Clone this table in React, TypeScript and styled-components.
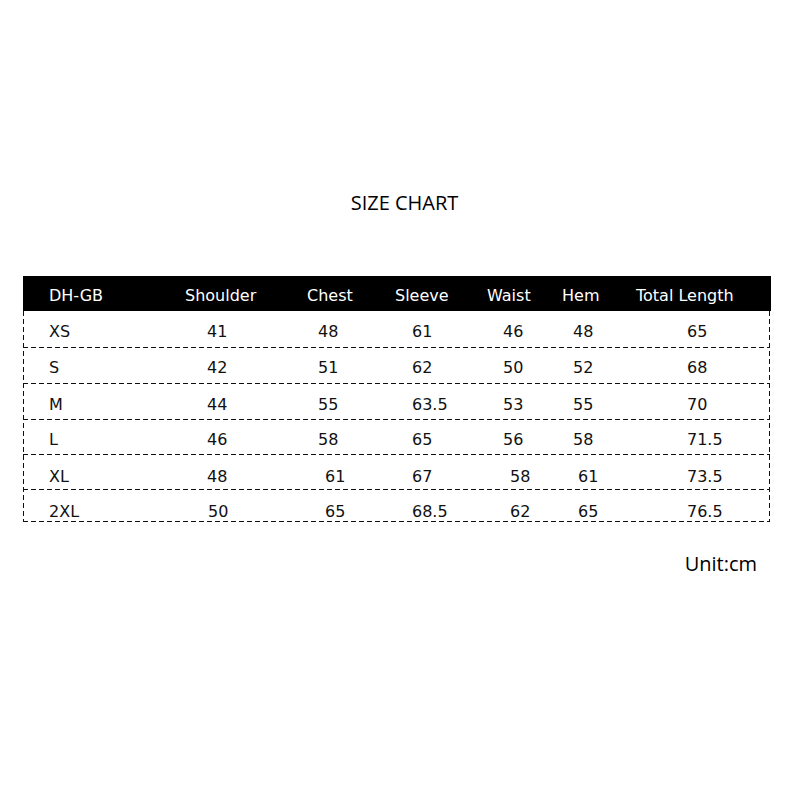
import * as React from "react";
import styled, { createGlobalStyle } from "styled-components";

const GlobalStyle = createGlobalStyle`
    html, body {
        margin: 0;
        padding: 0;
        background: #ffffff;
    }
`;

// grid columns start at the header labels; data sits a little further in
const COLUMNS = "162px 122px 88px 92px 75px 74px 1fr";
const DATA_INDENT = [26, 22, 11, 17, 16, 11, 51];
const HEAD_INDENT = [26, 0, 0, 0, 0, 0, 0];

const HEADINGS = ["DH-GB", "Shoulder", "Chest", "Sleeve", "Waist", "Hem", "Total Length"];

type SizeRow = {
    values: string[];
    height: number;
    pad: number;
    nudge?: number[];
};

const ROWS: SizeRow[] = [
    { values: ["XS", "41", "48", "61", "46", "48", "65"], height: 37, pad: 4 },
    { values: ["S", "42", "51", "62", "50", "52", "68"], height: 36, pad: 3 },
    { values: ["M", "44", "55", "63.5", "53", "55", "70"], height: 36, pad: 4 },
    { values: ["L", "46", "58", "65", "56", "58", "71.5"], height: 35, pad: 4 },
    { values: ["XL", "48", "61", "67", "58", "61", "73.5"], height: 35, pad: 8, nudge: [0, 0, 7, 0, 7, 5, 0] },
    { values: ["2XL", "50", "65", "68.5", "62", "65", "76.5"], height: 32, pad: 10, nudge: [0, 1, 7, 0, 7, 5, 0] },
];

const dashH = `repeating-linear-gradient(to right, #111 0 5px, transparent 5px 8px)`;
const dashV = `repeating-linear-gradient(to bottom, #111 0 5px, transparent 5px 8px)`;

const Page = styled.div`
    width: 800px;
    height: 800px;
    padding-top: 190px;
    box-sizing: border-box;
    display: flex;
    flex-direction: column;
    align-items: center;
`;

const Title = styled.h1`
    margin: 0 0 60px 9px;
    font-family: "Open Sans", "Liberation Sans", sans-serif;
    font-weight: 400;
    font-size: 20px;
    line-height: 26px;
    color: #000;
`;

const Table = styled.div`
    width: 748px;
    margin-right: 6px;
    display: flex;
    flex-direction: column;
    font-family: "DejaVu Sans", Verdana, sans-serif;
    font-size: 16px;
`;

const HeaderRow = styled.div`
    display: grid;
    grid-template-columns: ${COLUMNS};
    align-items: center;
    height: 35px;
    padding-top: 4px;
    box-sizing: border-box;
    background: #000;
    color: #fff;
`;

const Body = styled.div`
    width: 747px;
    background:
        ${dashV} left top / 1px 100% no-repeat,
        ${dashV} right top / 1px 100% no-repeat;
`;

const Row = styled.div<{ $height: number; $pad: number }>`
    display: grid;
    grid-template-columns: ${COLUMNS};
    align-items: center;
    height: ${p => p.$height}px;
    padding-top: ${p => p.$pad}px;
    box-sizing: border-box;
    background: ${dashH} left bottom / 100% 1px no-repeat;
    color: #111;
`;

const Cell = styled.span<{ $indent: number }>`
    padding-left: ${p => p.$indent}px;
    white-space: nowrap;
`;

const Unit = styled.div`
    align-self: flex-end;
    margin: 29px 43px 0 0;
    font-family: "Open Sans", "Liberation Sans", sans-serif;
    font-size: 20px;
    line-height: 26px;
    color: #000;
`;

export default function App() {
    return <>
        <GlobalStyle />
        <Page>
            <Title>SIZE CHART</Title>
            <Table>
                <HeaderRow>
                    {HEADINGS.map((h, i) => <Cell key={h} $indent={HEAD_INDENT[i]}>{h}</Cell>)}
                </HeaderRow>
                <Body>
                    {ROWS.map(row => <Row key={row.values[0]} $height={row.height} $pad={row.pad}>
                        {row.values.map((v, i) => <Cell key={i} $indent={DATA_INDENT[i] + (row.nudge ? row.nudge[i] : 0)}>
                            {v}
                        </Cell>)}
                    </Row>)}
                </Body>
            </Table>
            <Unit>Unit:cm</Unit>
        </Page>
    </>
}
